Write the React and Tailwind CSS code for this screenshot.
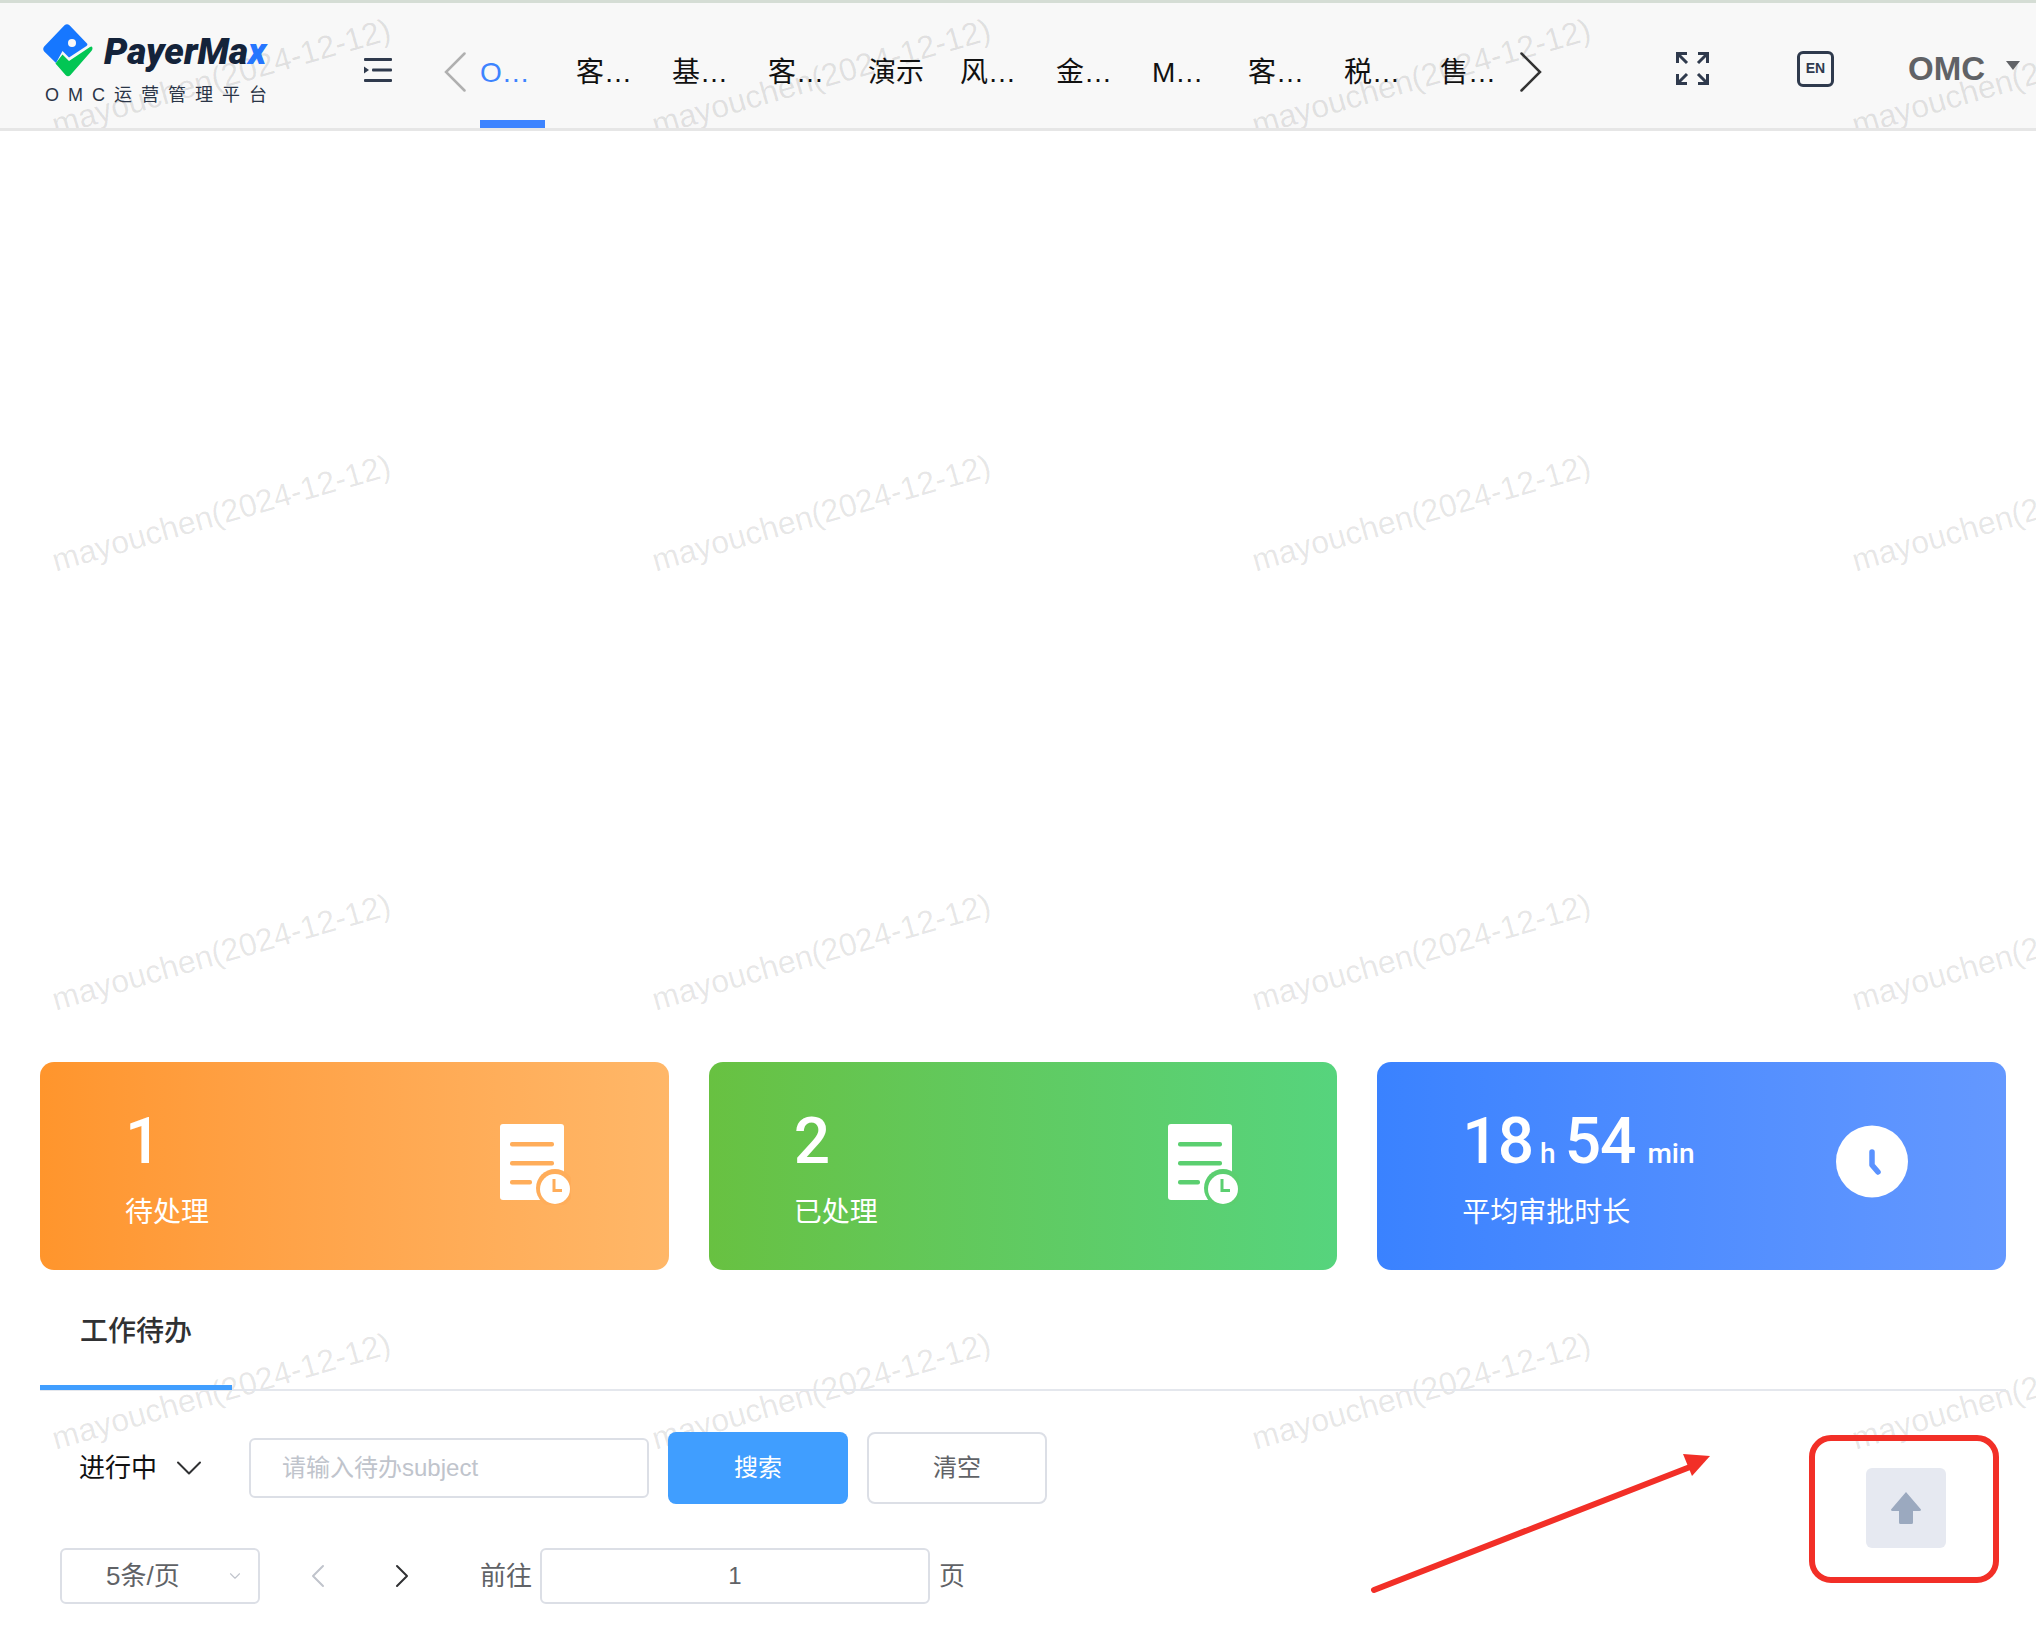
import React from 'react';
import { ChevronDown, ChevronLeft, ChevronRight } from 'lucide-react';

const FONT = "font-['Liberation_Sans','Noto_Sans_CJK_SC',sans-serif]";

const tabs = [
    { label: 'O…', active: true },
    { label: '客…' },
    { label: '基…' },
    { label: '客…' },
    { label: '演示', cls: 'pl-1' },
    { label: '风…' },
    { label: '金…' },
    { label: 'M…' },
    { label: '客…' },
    { label: '税…' },
    { label: '售…' },
];

function Logo() {
    return (
        <svg width="50" height="53" viewBox="0 0 50 53">
            <path d="M21.5 1.2Q24 -0.8 26.5 1.2L44 19.5Q45 21 43.5 22L26 33.5L19.5 27L13 39L1.2 27.5Q-0.8 25 1.2 22.5Z" fill="#1677ff" />
            <path d="M12.5 39.5L19.5 30.5L26 37L47 23Q49.5 21.5 49.5 24.5Q49.5 26 48 27.5L27.5 51Q25 53.5 22.5 51Z" fill="#02c654" />
            <circle cx="29" cy="19" r="4" fill="#f8f8f8" />
        </svg>
    );
}

function MenuIcon() {
    return (
        <svg className="mt-[8px] shrink-0" width="28" height="24" viewBox="0 0 28 24" fill="#2f3a4d">
            <rect x="0" y="0" width="28" height="3" rx="1" />
            <rect x="8" y="10.5" width="20" height="3" rx="1" />
            <rect x="0" y="21" width="28" height="3" rx="1" />
            <path d="M0 8.5L5 12L0 15.5Z" />
        </svg>
    );
}

function FullscreenIcon() {
    return (
        <svg width="33" height="33" viewBox="0 0 33 33" fill="none" stroke="#2f3a4d" strokeWidth="3">
            <path d="M1.5 11V1.5H11M2 2L11 11" />
            <path d="M22 1.5H31.5V11M31 2L22 11" />
            <path d="M1.5 22V31.5H11M2 31L11 22" />
            <path d="M22 31.5H31.5V22M31 31L22 22" />
        </svg>
    );
}

function DocIcon({ accent }) {
    return (
        <svg className="-mt-[3px]" width="71" height="81" viewBox="0 0 71 81">
            <rect x="0" y="0" width="64" height="76" rx="3" fill="#fff" />
            <rect x="10" y="18" width="44" height="4.5" rx="2" fill={accent} />
            <rect x="10" y="37" width="44" height="4.5" rx="2" fill={accent} />
            <rect x="10" y="56" width="22" height="4.5" rx="2" fill={accent} />
            <circle cx="55" cy="64" r="19" fill={accent} />
            <circle cx="55" cy="65" r="15" fill="#fff" />
            <path d="M54 55V66.5H62" fill="none" stroke={accent} strokeWidth="3" />
        </svg>
    );
}

function ClockIcon() {
    return (
        <svg className="-mt-[9px]" width="72" height="73" viewBox="0 0 72 73">
            <circle cx="36" cy="36.5" r="36" fill="#fff" />
            <path d="M36 27V40L42 47" fill="none" stroke="#5a92ff" strokeWidth="5.5" strokeLinecap="round" strokeLinejoin="round" />
        </svg>
    );
}

function StatCard({ gradient, children, label, icon }) {
    return (
        <div className={`flex h-[208px] flex-1 items-center justify-between rounded-[14px] pl-[85px] pr-[98px] text-white ${gradient}`}>
            <div className="pt-[7px]">
                <div className="flex h-[72px] items-baseline font-['Roboto',sans-serif] text-[64px] leading-[72px] font-medium tracking-[-1px]">{children}</div>
                <div className="mt-[15px] text-[28px] leading-[40px]">{label}</div>
            </div>
            {icon}
        </div>
    );
}

function Watermark({ children }) {
    return (
        <div className="flex items-center justify-center">
            <span className="-rotate-[16deg] text-[32px] whitespace-nowrap text-black/10">{children}</span>
        </div>
    );
}

export default function App() {
    const cols = Array.from({ length: 4 });
    const rest = Array.from({ length: 12 });

    return (
        <div className={`relative min-h-[1634px] w-full overflow-hidden bg-white ${FONT}`}>
            {/* Header */}
            <header className="relative flex h-[131px] items-center overflow-hidden border-t-[3px] border-b-[3px] border-t-[#d5ddd5] border-b-[#e6e6e6] bg-[#f8f8f8]">
                <div className="pointer-events-none absolute -top-[146px] -left-[79px] grid grid-cols-[repeat(4,600px)] grid-rows-[439px]">
                    {cols.map((_, i) => (
                        <Watermark key={i}>mayouchen(2024-12-12)</Watermark>
                    ))}
                </div>
                <div className="relative w-[364px] shrink-0 pl-[43px]">
                    <div className="flex items-start gap-[11px]">
                        <Logo />
                        <span className="mt-[7px] font-['Roboto',sans-serif] text-[37px] leading-[42px] font-black text-[#14233a] italic">
                            PayerMa<span className="text-[#2676ff]">x</span>
                        </span>
                    </div>
                    <div className="mt-[6px] ml-[2px] text-[18px] leading-[24px] tracking-[9px] whitespace-nowrap text-[#2a3547]">OMC运营管理平台</div>
                </div>
                <MenuIcon />
                <svg className="relative mt-[13px] ml-[52px] shrink-0" width="22" height="40" viewBox="0 0 22 40" fill="none" stroke="#b0b0b0" strokeWidth="2.5" strokeLinecap="round">
                    <path d="M20.5 1.5L2 20L20.5 38.5" />
                </svg>
                <nav className="relative ml-[14px] flex h-full w-[1040px] shrink-0 items-center overflow-hidden">
                    {tabs.map((tab, i) => (
                        <div key={i} className={`relative flex h-full w-[96px] shrink-0 items-center pt-[14px] text-[28px] ${tab.active ? 'text-[#3d84ff]' : 'text-[#111111]'} ${tab.cls || ''}`}>
                            {tab.label}
                            {tab.active && <span className="absolute bottom-0 left-0 h-[8px] w-[65px] bg-[#3d84ff]" />}
                        </div>
                    ))}
                </nav>
                <svg className="relative mt-[13px] shrink-0" width="22" height="40" viewBox="0 0 22 40" fill="none" stroke="#333333" strokeWidth="2.5" strokeLinecap="round">
                    <path d="M1.5 1.5L20 20L1.5 38.5" />
                </svg>
                <div className="relative mt-[6px] ml-[134px] shrink-0"><FullscreenIcon /></div>
                <div className="relative mt-[6px] ml-[88px] flex h-[36px] w-[37px] shrink-0 items-center justify-center rounded-[6px] border-[3px] border-[#2f3a4d] text-[14px] font-bold text-[#2f3a4d]">EN</div>
                <span className="relative mt-[6px] ml-[74px] shrink-0 text-[33px] font-bold text-[#606266]">OMC</span>
                <span className="relative ml-[21px] h-0 w-0 shrink-0 border-x-[7px] border-t-[9px] border-x-transparent border-t-[#606266]" />
            </header>

            {/* Watermark */}
            <div className="pointer-events-none absolute top-[293px] -left-[79px] grid grid-cols-[repeat(4,600px)] grid-rows-[repeat(3,439px)]">
                {rest.map((_, i) => (
                    <Watermark key={i}>mayouchen(2024-12-12)</Watermark>
                ))}
            </div>

            {/* Content */}
            <main className="relative pt-[931px] pr-[30px] pl-[40px]">
                <div className="flex gap-[40px]">
                    <StatCard gradient="bg-linear-to-r from-[#ff952c] to-[#ffb768]" label="待处理" icon={<DocIcon accent="#ffad5a" />}>1</StatCard>
                    <StatCard gradient="bg-linear-to-r from-[#68c141] to-[#56d47d]" label="已处理" icon={<DocIcon accent="#5bcf70" />}>2</StatCard>
                    <StatCard gradient="bg-linear-to-r from-[#3a82ff] to-[#6498ff]" label="平均审批时长" icon={<ClockIcon />}>
                        18<span className="mr-[9px] ml-[7px] text-[28px] tracking-normal">h</span>54<span className="ml-[12px] text-[28px] tracking-normal">min</span>
                    </StatCard>
                </div>

                <div className="flex h-[121px] items-end border-b-2 border-[#e4e7ed]">
                    <div className="-mb-[1px] flex h-[120px] w-[192px] items-center border-b-[5px] border-[#409eff] pt-[8px] pl-[40px] text-[28px] font-medium text-[#303133]">工作待办</div>
                </div>

                <div className="mt-[41px] flex h-[72px] items-center">
                    <span className="ml-[39px] text-[26px] text-[#111111]">进行中</span>
                    <ChevronDown className="ml-[10px] text-[#303133]" size={44} strokeWidth={2} absoluteStrokeWidth />
                    <input
                        className="ml-[38px] h-[60px] w-[400px] rounded-[6px] border-2 border-[#dcdfe6] bg-transparent px-[31px] text-[24px] outline-none placeholder:text-[#c0c4cc]"
                        placeholder="请输入待办subject"
                    />
                    <button className="ml-[19px] h-[72px] w-[180px] rounded-[8px] bg-[#409eff] text-[24px] text-white">搜索</button>
                    <button className="ml-[19px] h-[72px] w-[180px] rounded-[8px] border-2 border-[#dcdfe6] bg-white text-[24px] text-[#606266]">清空</button>
                </div>

                <div className="mt-[44px] flex h-[56px] items-center pl-[20px] text-[26px] text-[#606266]">
                    <div className="flex h-full w-[200px] items-center justify-between rounded-[6px] border-2 border-[#dcdfe6] bg-white pr-[14px] pl-[44px]">
                        5条/页
                        <ChevronDown className="text-[#c0c4cc]" size={18} strokeWidth={1.5} />
                    </div>
                    <ChevronLeft className="ml-[38px] text-[#c0c4cc]" size={40} strokeWidth={2} absoluteStrokeWidth />
                    <ChevronRight className="ml-[44px] text-[#303133]" size={40} strokeWidth={2} absoluteStrokeWidth />
                    <span className="ml-[58px]">前往</span>
                    <input
                        className="ml-[8px] h-full w-[390px] rounded-[6px] border-2 border-[#dcdfe6] bg-white text-center text-[24px] outline-none"
                        value="1"
                        readOnly
                    />
                    <span className="ml-[9px]">页</span>
                </div>
            </main>

            {/* Back to top button */}
            <div className="absolute top-[1468px] left-[1866px] flex h-[80px] w-[80px] items-center justify-center rounded-[6px] bg-[#e6e9f1]">
                <svg width="32" height="32" viewBox="0 0 32 32" fill="#9ba9bf">
                    <path d="M16 0L31 17.5Q31 19 29.5 19H23V30.5Q23 32 21.5 32H10.5Q9 32 9 30.5V19H2.5Q1 19 1 17.5Z" />
                </svg>
            </div>

            {/* Screenshot annotation */}
            <div className="absolute top-[1435px] left-[1809px] h-[148px] w-[190px] rounded-[22px] border-[6px] border-[#f22f27]" />
            <svg className="absolute top-[1450px] left-[1365px]" width="350" height="150" viewBox="0 0 350 150">
                <path d="M9 140L325 17" stroke="#f22f27" strokeWidth="6" strokeLinecap="round" />
                <path d="M345 6L318 4L327 26Z" fill="#f22f27" />
            </svg>
        </div>
    );
}
